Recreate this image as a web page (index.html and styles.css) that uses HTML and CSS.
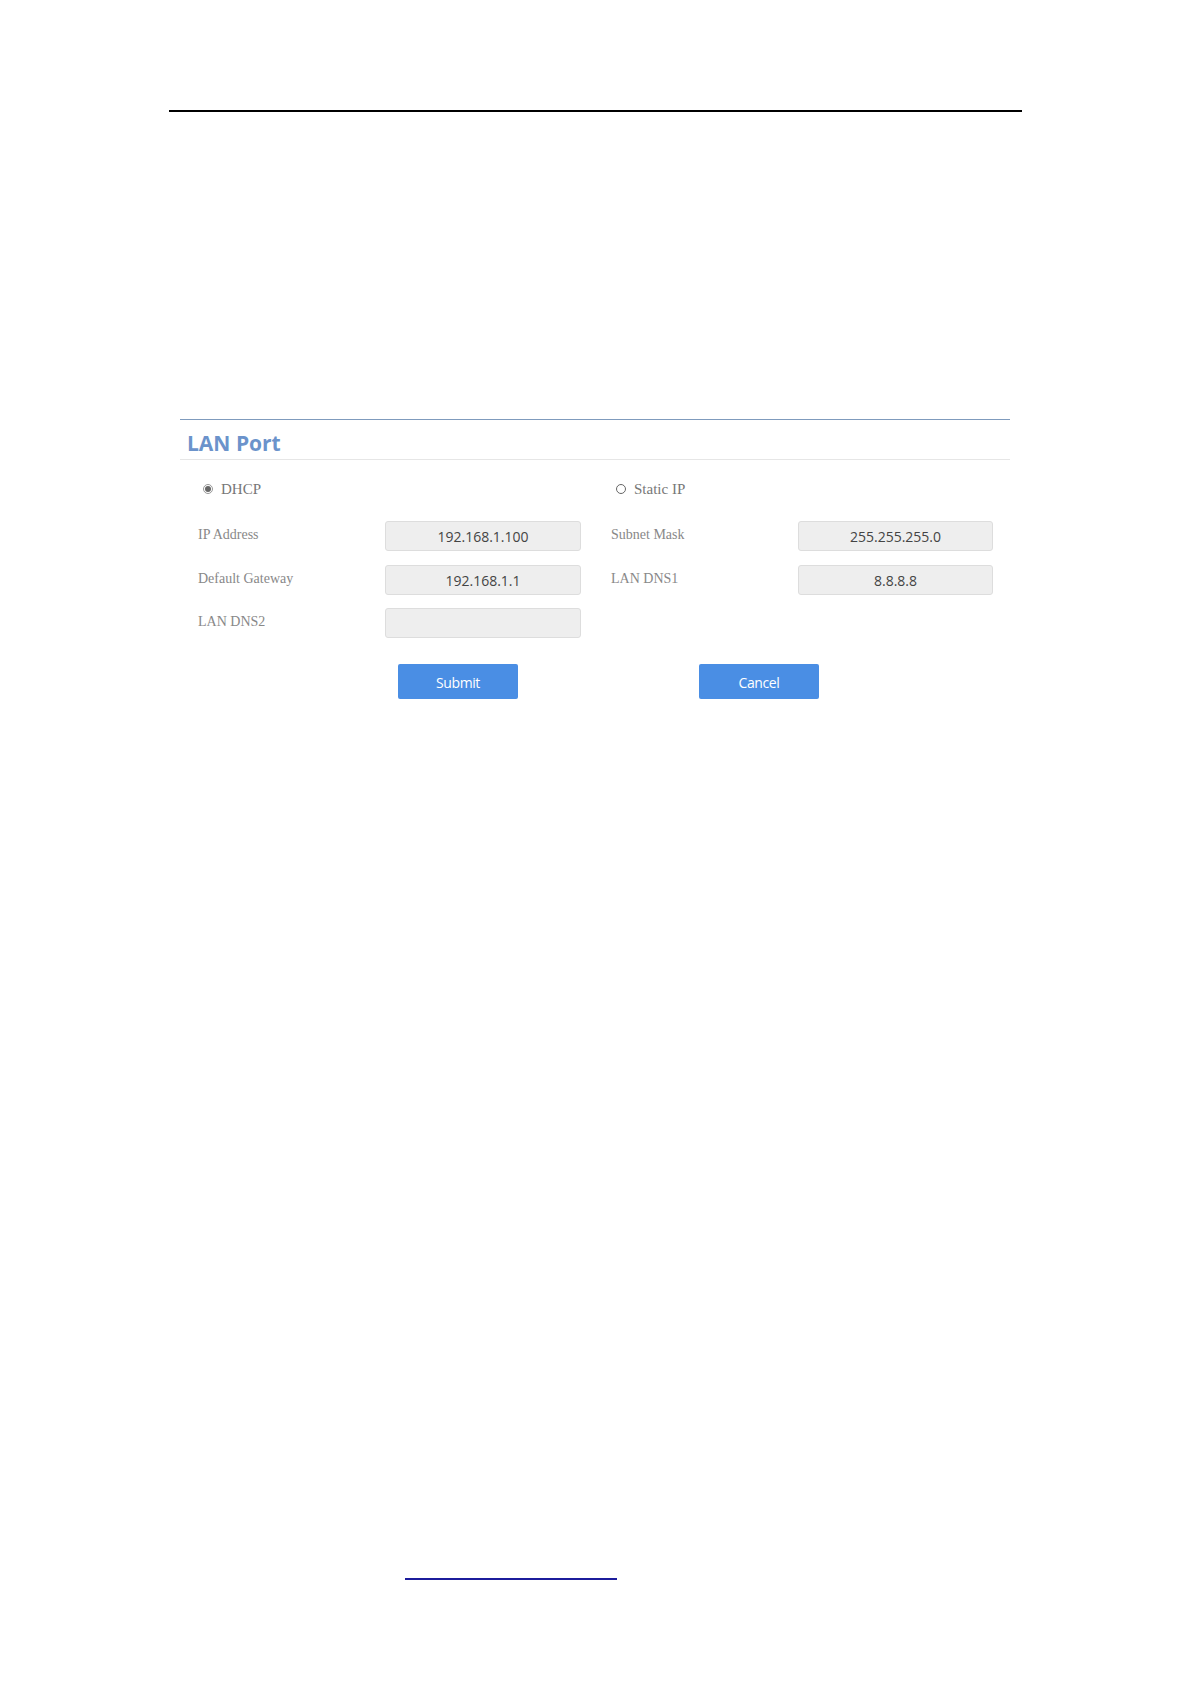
FILE: index.html
```html
<!DOCTYPE html>
<html>
<head>
<meta charset="utf-8">
<title>LAN Port</title>
<link rel="stylesheet" href="styles.css">
</head>
<body>
<div class="page">
  <div class="header-rule"></div>

  <section class="panel">
    <h2 class="panel-title">LAN Port</h2>

    <div class="mode-row">
      <label class="mode mode-left"><span class="radio checked"></span>DHCP</label>
      <label class="mode mode-right"><span class="radio"></span>Static IP</label>
    </div>

    <div class="fields">
      <span class="field-label">IP Address</span>
      <div class="field-input">192.168.1.100</div>
      <span class="spacer"></span>
      <span class="field-label">Subnet Mask</span>
      <div class="field-input">255.255.255.0</div>

      <span class="field-label">Default Gateway</span>
      <div class="field-input">192.168.1.1</div>
      <span class="spacer"></span>
      <span class="field-label">LAN DNS1</span>
      <div class="field-input">8.8.8.8</div>

      <span class="field-label">LAN DNS2</span>
      <div class="field-input"></div>
    </div>

    <div class="actions">
      <button class="btn">Submit</button>
      <button class="btn">Cancel</button>
    </div>
  </section>

  <div class="footer-link"></div>
</div>
</body>
</html>
```

FILE: styles.css
```css
html, body {
  margin: 0;
  padding: 0;
  background: #ffffff;
}

.page {
  padding-top: 110px;
  min-height: 1574px;
}

.header-rule {
  margin-left: 169px;
  width: 853px;
  height: 2px;
  background: #000000;
}

.panel {
  margin: 307px 0 0 180px;
  width: 830px;
  border-top: 1px solid #7f9bbd;
}

.panel-title {
  margin: 0;
  padding: 6px 0 0 7px;
  height: 33px;
  line-height: 35px;
  border-bottom: 1px solid #e6e6e6;
  font-family: "Open Sans", "DejaVu Sans", sans-serif;
  font-weight: 700;
  font-size: 21px;
  color: #6b93cb;
}

.mode-row {
  display: flex;
  padding-top: 19px;
  height: 20px;
}

.mode {
  display: flex;
  align-items: center;
  font-family: "Liberation Serif", serif;
  font-size: 15px;
  color: #777777;
  line-height: 20px;
}

.mode-left {
  margin-left: 23px;
  width: 413px;
}

.radio {
  box-sizing: border-box;
  width: 10px;
  height: 10px;
  border: 1px solid #666666;
  border-radius: 50%;
  margin-right: 8px;
  position: relative;
  background: #ffffff;
}

.radio.checked {
  border-color: #999999;
}

.radio.checked::after {
  content: "";
  position: absolute;
  left: 1px;
  top: 1px;
  width: 6px;
  height: 6px;
  border-radius: 50%;
  background: #666666;
}

.fields {
  display: grid;
  grid-template-columns: 187px 196px 30px 187px 195px;
  grid-auto-rows: 30px;
  row-gap: 13.5px;
  margin: 22px 0 0 18px;
}

.field-label {
  font-family: "Liberation Serif", serif;
  font-size: 14px;
  line-height: 28px;
  color: #888888;
}

.field-input {
  box-sizing: border-box;
  height: 30px;
  border: 1px solid #dddddd;
  border-radius: 3px;
  background: #eeeeee;
  font-family: "Open Sans", "Noto Sans", sans-serif;
  font-size: 14px;
  line-height: 29px;
  color: #444444;
  text-align: center;
}

.actions {
  display: flex;
  gap: 181px;
  margin: 26px 0 0 218px;
}

.btn {
  width: 120px;
  height: 35px;
  border: none;
  border-radius: 2px;
  background: #4a8ee4;
  color: #ffffff;
  font-family: "Open Sans", "Noto Sans", sans-serif;
  font-size: 14px;
  letter-spacing: -0.4px;
  padding: 2px 0 0;
}

.footer-link {
  margin: 879px 0 0 405px;
  width: 212px;
  border-bottom: 2px solid #1c1c9c;
}
```
